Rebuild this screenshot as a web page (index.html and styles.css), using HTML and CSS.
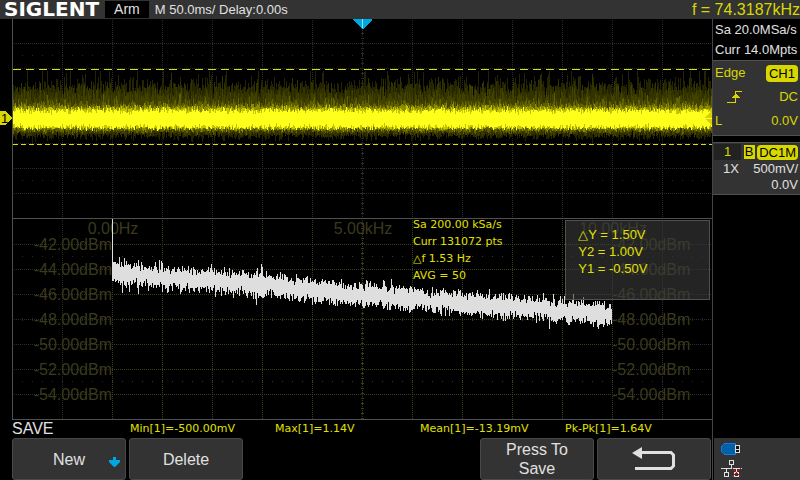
FILE: index.html
```html
<!DOCTYPE html>
<html lang="en">
<head>
<meta charset="utf-8">
<title>SIGLENT</title>
<link rel="stylesheet" href="styles.css">
</head>
<body>
<header class="topbar">
  <span class="logo">SIGLENT</span>
  <span class="state">Arm</span>
  <span class="timebase">M 50.0ms/ Delay:0.00s</span>
  <output class="counter">f = 74.3187kHz</output>
</header>
<div class="screen">
  <main class="main">
    <div class="plot">
      <svg class="scope" viewBox="0 19 712 401" shape-rendering="crispEdges">
        <g id="grid"></g>
        <g id="labels" class="axis"></g>
        <g id="traces"></g>
        <path class="cursor" stroke-dasharray="8 5" d="M13 69.5H712"/>
        <path class="cursor" stroke-dasharray="5 3" d="M13 144.5H712"/>
        <path class="frame" d="M12.5 19V419.5H712M12 218.5H712"/>
        <path fill="#00a8e0" d="M353 19H372V20L363 29H362L353 20Z"/>
        <path stroke="#8fe0ff" d="M362.5 19V28"/>
        <path fill="#d8d800" d="M0 111H6L12 118L6 125H0Z"/>
        <text class="marker" x="1" y="123">1</text>
        <path fill="#d8d000" d="M704 118L712 110V126Z"/>
        <path stroke="#ffff40" d="M704 118.5H712"/>
      </svg>
      <div class="fft-info">
        <div>Sa 200.00 kSa/s</div>
        <div>Curr 131072 pts</div>
        <div>△f 1.53 Hz</div>
        <div>AVG = 50</div>
      </div>
      <div class="cursor-info">
        <div>△Y = 1.50V</div>
        <div>Y2 = 1.00V</div>
        <div>Y1 = -0.50V</div>
      </div>
    </div>
    <div class="measures">
      <h1 class="menu-title">SAVE</h1>
      <span>Min[1]=-500.00mV</span>
      <span>Max[1]=1.14V</span>
      <span>Mean[1]=-13.19mV</span>
      <span>Pk-Pk[1]=1.64V</span>
    </div>
    <nav class="menu">
      <button class="key key-new" type="button">New
        <svg class="down" viewBox="0 0 12 10" aria-hidden="true"><path fill="#00a8e0" d="M4 0H7V3H11V5L6 10H5L0 5V3H4Z"/></svg>
      </button>
      <button class="key" type="button">Delete</button>
      <button class="key key-save" type="button">Press To<br>Save</button>
      <button class="key" type="button" aria-label="Back">
        <svg class="back" viewBox="0 0 44 24" aria-hidden="true"><path fill="#e0e0e0" d="M0 6L10 0V12Z"/><path fill="none" stroke="#e0e0e0" stroke-width="3" d="M9 5.5H39L41.5 8V19L39 21.500H3"/></svg>
      </button>
    </nav>
  </main>
  <aside class="side">
    <div class="acquire"><div>Sa 20.0MSa/s</div><div>Curr 14.0Mpts</div></div>
    <section class="panel trigger">
      <div class="row"><span>Edge</span><span class="badge">CH1</span></div>
      <div class="row">
        <svg class="edge" viewBox="0 0 16 12" aria-hidden="true" shape-rendering="crispEdges"><path fill="none" stroke="#d8d800" d="M0 11.500H8.500V.5H15"/><path fill="#d8d800" d="M8 3H9L13 7H4Z"/></svg>
        <span>DC</span>
      </div>
      <div class="row"><span>L</span><span>0.0V</span></div>
    </section>
    <section class="panel channel">
      <div class="tabs"><span class="tab">1</span><span class="bw">B</span><span class="badge">DC1M</span></div>
      <div class="row"><span>1X</span><span>500mV/</span></div>
      <div class="row end">0.0V</div>
    </section>
    <div class="status">
      <svg class="usb" viewBox="0 0 20 12" aria-hidden="true" shape-rendering="crispEdges"><path fill="#0060a8" stroke="#1478e0" d="M14.500 .5H3.500L.5 3.500V8.500L3.500 11.500H14.500Z"/><path fill="#111" stroke="#ddd" d="M14.500 2.500H18.500V9.500H14.500ZM14 6H19"/></svg>
      <svg class="lan" viewBox="0 0 22 18" aria-hidden="true" shape-rendering="crispEdges"><path fill="none" stroke="#e0e0e0" d="M8.500 .5H12.500V4.500H8.500ZM10.500 5V8.500M0 8.500H21M5.500 9V12M15.500 9V12M3.500 12.500H7.500V16.500H3.500ZM13.500 12.500H17.500V16.500H13.500Z"/><path stroke="#d01010" d="M11 8L20 17M20 8L11 17"/></svg>
    </div>
  </aside>
</div>
<script src="scope.js"></script>
</body>
</html>
```
FILE: styles.css
```css
* { box-sizing: border-box; }

body {
  margin: 0;
  min-height: 100vh;
  overflow: hidden;
  background: #000;
  color: #e0e0e0;
  font: 13px/17px "Liberation Sans", sans-serif;
}

.topbar {
  display: flex;
  align-items: center;
  height: 19px;
  padding-left: 4px;
  background: #333;
}

.logo {
  color: #fff;
  font: bold 20px/19px "DejaVu Sans", sans-serif;
}

.state {
  margin: 0 6px;
  padding: 0 9px;
  background: #000;
  font-size: 14px;
}

.timebase { flex: 1; }

.counter {
  color: #d8d800;
  font-size: 16px;
}

.screen {
  display: grid;
  grid-template-columns: 1fr 88px;
}

.plot { position: relative; }

.scope {
  display: block;
  width: 100%;
}

.frame { fill: none; stroke: #505050; }
.cursor { stroke: #e0e000; }
.axis { fill: #3b3b1c; font-size: 16px; }
.marker { fill: #000; font-size: 13px; }
.grey { fill: none; stroke: #2a2a2a; }
.olive { fill: none; stroke: #3c3c1c; }
.spectrum { stroke: #dedede; }

.fft-info {
  position: absolute;
  left: 58%;
  bottom: 34%;
  color: #e0e000;
  font: 11px/17px "DejaVu Sans", sans-serif;
}

.cursor-info {
  position: absolute;
  left: 79.400%;
  right: 2px;
  top: 50%;
  height: 20%;
  padding: 5px 12px;
  border: 1px solid #505050;
  background: rgba(60, 60, 60, .6);
  color: #e0e000;
}

.measures {
  display: grid;
  grid-template-columns: 118px 145px 145px 145px 1fr;
  align-items: center;
  height: 18px;
  padding-left: 12px;
  color: #e0e000;
  font: 11px/18px "DejaVu Sans", sans-serif;
}

.menu-title {
  margin: 0;
  color: #e0e0e0;
  font: 16px/18px "Liberation Sans", sans-serif;
}

.menu {
  display: grid;
  grid-template-columns: repeat(6, 1fr);
  gap: 3px;
  padding: 0 1px 0 12px;
}

.key {
  display: flex;
  align-items: center;
  justify-content: center;
  position: relative;
  height: 42px;
  padding: 0;
  border: 1px solid #484848;
  border-radius: 3px;
  background: #333;
  color: #e0e0e0;
  font: 16px/19px "Liberation Sans", sans-serif;
}

.key-save { grid-column: 5; }

.down {
  position: absolute;
  right: 4px;
  bottom: 12px;
  width: 12px;
}

.back { width: 44px; }

.side {
  display: flex;
  flex-direction: column;
  border-left: 1px solid #444;
}

.acquire {
  padding: 1px 2px 0;
  line-height: 20px;
}

.panel {
  border-top: 1px solid #505050;
  border-bottom: 1px solid #505050;
  background: #333;
}

.trigger {
  padding: 0 2px 2px;
  color: #d8d800;
  line-height: 24px;
}

.row {
  display: flex;
  align-items: center;
  justify-content: space-between;
}

.trigger .row { height: 24px; }

.badge {
  padding: 0 3px;
  border-radius: 4px;
  background: #d8d800;
  color: #000;
  line-height: 17px;
}

.edge { width: 16px; margin-left: 12px; }

.channel {
  margin-top: 6px;
  padding: 0 2px 1px 1px;
  line-height: 16px;
}

.channel .row { padding-left: 9px; }
.channel .end { justify-content: flex-end; }

.tabs {
  display: flex;
  align-items: center;
  justify-content: space-between;
  height: 18px;
}

.tabs .badge {
  padding: 0 2px;
  line-height: 15px;
}

.tab {
  padding: 0 10px;
  background: #222;
  color: #d8d800;
}

.bw {
  padding: 0 1px;
  background: #d8d800;
  color: #000;
  line-height: 14px;
}

.status {
  display: flex;
  flex-direction: column;
  gap: 5px;
  height: 42px;
  margin: auto 0 0 1px;
  padding: 5px 7px 0;
  background: #333;
}

.status svg { flex: none; }
.usb { width: 20px; height: 12px; }
.lan { width: 22px; height: 18px; }
```
FILE: scope.js
```js
const NS = "http://www.w3.org/2000/svg";
let seed = 7;
const rnd = () => (seed = (seed * 16807) % 2147483647) / 2147483647;
const bell = () => rnd() + rnd() + rnd() - 1.5;

function add(parent, name, attrs, text) {
  const el = document.createElementNS(NS, name);
  for (const k in attrs) el.setAttribute(k, attrs[k]);
  if (text) el.textContent = text;
  document.getElementById(parent).appendChild(el);
}

// Graticule: dotted divisions, sparse minor rows and a ticked centre axis.
function line(cls, d, dash) {
  add("grid", "path", { class: cls, d, "stroke-dasharray": dash });
}
for (let x = 62; x < 712; x += 50) {
  line("grey", `M${x + .5} 20V218`, "1 1");
  line(x > 100 && x < 620 ? "olive" : "grey", `M${x + .5} 220V419`, "1 1");
}
for (let y = 43; y < 218; y += 25) line("grey", `M14 ${y + .5}H712`, "1 1");
for (const y of [55, 180]) line("grey", `M22 ${y + .5}H712`, "1 9");
function lowerRow(y, dash) {
  line("grey", `M${dash === "1 9" ? 22 : 14} ${y + .5}H112`, dash);
  line("olive", `M112 ${y + .5}H612`, dash);
  line("grey", `M612 ${y + .5}H712`, dash);
}
for (let y = 244; y < 419; y += 25) lowerRow(y, "1 1");
for (const y of [256, 381]) lowerRow(y, "1 9");
for (let x = 22; x < 712; x += 10)
  line(x > 112 && x < 612 ? "olive" : "grey", `M${x + .5} 318V321`, "none");
for (let y = 23; y < 419; y += 5)
  line(y > 218 ? "olive" : "grey", `M361 ${y + .5}H364`, "none");

// Spectrum axis labels.
for (let i = 0; i < 7; i++) {
  const t = `-${42 + i * 2}.00dBm`;
  add("labels", "text", { x: 112, y: 250 + i * 25, "text-anchor": "end" }, t);
  add("labels", "text", { x: 612, y: 250 + i * 25 }, t);
}
["0.00Hz", "5.00kHz", "10.00kHz"].forEach((t, i) =>
  add("labels", "text", { x: 113 + i * 250, y: 234, "text-anchor": "middle" }, t));

// Channel 1 persistence: [colour, top, top spread, bottom, bottom spread, spike]
const layers = [
  ["#242400", 87, 8, 136, 5, 8],
  ["#333300", 92, 9, 134, 4, 5],
  ["#424200", 98, 8, 132, 4, 3],
  ["#606000", 104, 5, 131, 3, 2],
  ["#8c8c00", 107, 3, 129, 3, 1],
  ["#c4c400", 109, 3, 128, 2, 0],
  ["#ffff1c", 111, 3, 127, 3, 0]
];
for (const [stroke, top, ts, bottom, bs, spike] of layers) {
  let d = "";
  for (let x = 13; x < 712; x++) {
    const up = rnd() < .35 ? -Math.log(rnd() + .05) * spike : 0;
    const a = Math.max(71, Math.round(top + bell() * ts - up));
    d += `M${x + .5} ${a}V${Math.round(bottom + bell() * bs)}`;
  }
  add("traces", "path", { stroke, d });
}

// FFT noise floor.
const floor = [[112, 273], [240, 283], [340, 293], [412, 299], [540, 309], [613, 315]];
let d = "M112.5 219V270";
for (let x = 112; x < 612; x++) {
  const i = floor.findIndex(p => p[0] > x);
  const [x0, y0] = floor[i - 1], [x1, y1] = floor[i];
  const c = y0 + (y1 - y0) * (x - x0) / (x1 - x0);
  const reach = () => 9 + bell() * 5 + (rnd() < .08 ? rnd() * 8 : 0);
  d += `M${x + .5} ${Math.round(c - reach())}V${Math.round(c + reach())}`;
}
add("traces", "path", { class: "spectrum", d });
```
